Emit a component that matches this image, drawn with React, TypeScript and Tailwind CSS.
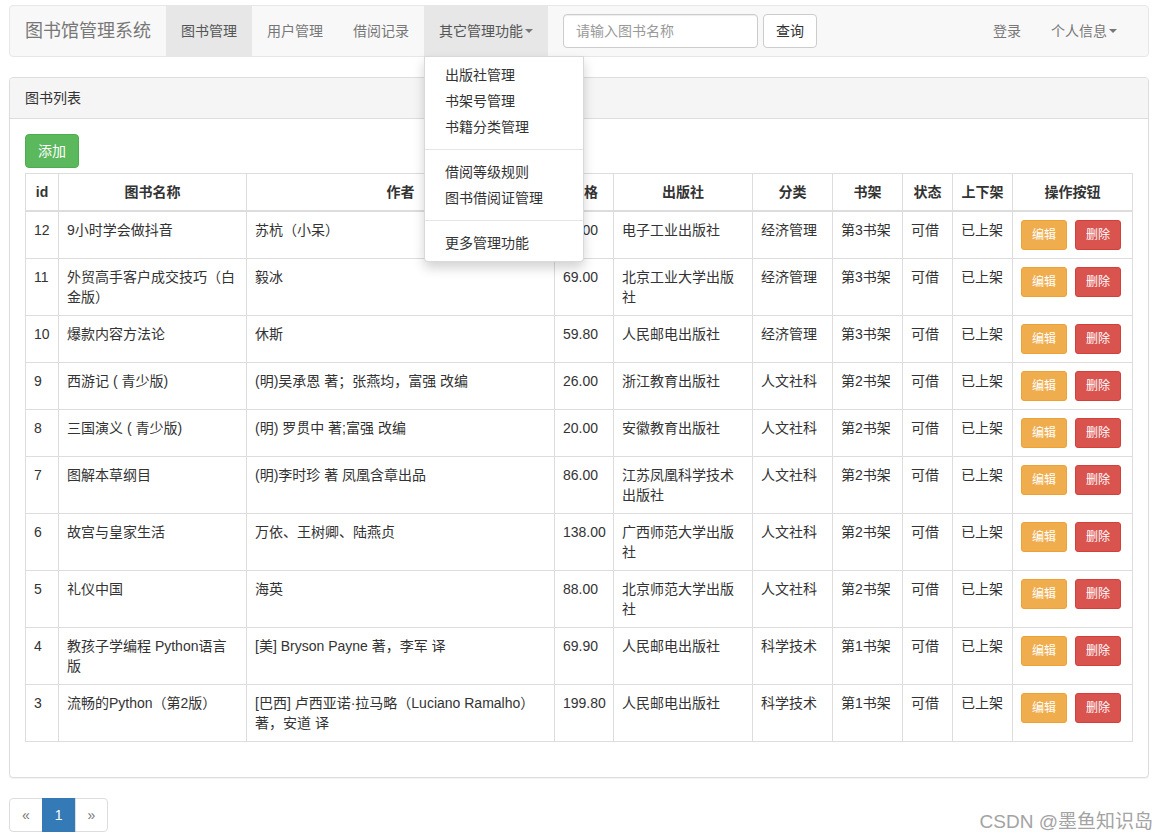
import React from "react";

type Row = {
  id: string;
  name: string;
  author: string;
  price: string;
  pub: string;
  cat: string;
  shelf: string;
};

const rows: Row[] = [
  { id: "12", name: "9小时学会做抖音", author: "苏杭（小呆）", price: "39.00", pub: "电子工业出版社", cat: "经济管理", shelf: "第3书架" },
  { id: "11", name: "外贸高手客户成交技巧（白金版）", author: "毅冰", price: "69.00", pub: "北京工业大学出版社", cat: "经济管理", shelf: "第3书架" },
  { id: "10", name: "爆款内容方法论", author: "休斯", price: "59.80", pub: "人民邮电出版社", cat: "经济管理", shelf: "第3书架" },
  { id: "9", name: "西游记 ( 青少版)", author: "(明)吴承恩 著；张燕均，富强 改编", price: "26.00", pub: "浙江教育出版社", cat: "人文社科", shelf: "第2书架" },
  { id: "8", name: "三国演义 ( 青少版)", author: "(明) 罗贯中 著;富强 改编", price: "20.00", pub: "安徽教育出版社", cat: "人文社科", shelf: "第2书架" },
  { id: "7", name: "图解本草纲目", author: "(明)李时珍 著 凤凰含章出品", price: "86.00", pub: "江苏凤凰科学技术出版社", cat: "人文社科", shelf: "第2书架" },
  { id: "6", name: "故宫与皇家生活", author: "万依、王树卿、陆燕贞", price: "138.00", pub: "广西师范大学出版社", cat: "人文社科", shelf: "第2书架" },
  { id: "5", name: "礼仪中国", author: "海英", price: "88.00", pub: "北京师范大学出版社", cat: "人文社科", shelf: "第2书架" },
  { id: "4", name: "教孩子学编程 Python语言版", author: "[美] Bryson Payne 著，李军 译", price: "69.90", pub: "人民邮电出版社", cat: "科学技术", shelf: "第1书架" },
  { id: "3", name: "流畅的Python（第2版）", author: "[巴西] 卢西亚诺·拉马略（Luciano Ramalho） 著，安道 译", price: "199.80", pub: "人民邮电出版社", cat: "科学技术", shelf: "第1书架" },
];

const headers = ["id", "图书名称", "作者", "价格", "出版社", "分类", "书架", "状态", "上下架", "操作按钮"];
const widths = [33, 188, 308, 59, 139, 80, 70, 50, 60, 120];

function Caret() {
  return (
    <span className="inline-block ml-[2px] w-0 h-0 border-t-[4px] border-l-[4px] border-r-[4px] border-t-[#777] border-l-transparent border-r-transparent align-middle" />
  );
}

export default function App() {
  return (
    <div
      className="relative h-[840px] overflow-hidden bg-white text-[14px] leading-[20px] text-[#333]"
      style={{ fontFamily: '"Liberation Sans", "Noto Sans CJK SC", sans-serif' }}
    >
      <div className="ml-[9px] w-[1140px] pt-[5px]">
        {/* Navbar */}
        <div className="relative z-10 flex h-[52px] items-stretch rounded-[4px] border border-[#e7e7e7] bg-[#f8f8f8]">
          <div className="flex h-[50px] items-center px-[15px] text-[18px] text-[#777]">图书馆管理系统</div>
          <div className="flex h-[50px] items-center bg-[#e7e7e7] px-[15px] text-[#555]">图书管理</div>
          <div className="flex h-[50px] items-center px-[15px] text-[#777]">用户管理</div>
          <div className="flex h-[50px] items-center px-[15px] text-[#777]">借阅记录</div>
          <div className="relative flex h-[50px] items-center bg-[#e7e7e7] px-[15px] text-[#555]">
            其它管理功能
            <Caret />
            <div className="absolute left-0 top-full w-[160px] rounded-b-[4px] border border-[rgba(0,0,0,0.15)] bg-white py-[5px] text-[#333] shadow-[0_6px_12px_rgba(0,0,0,0.175)]">
              <div className="px-[20px] py-[3px]">出版社管理</div>
              <div className="px-[20px] py-[3px]">书架号管理</div>
              <div className="px-[20px] py-[3px]">书籍分类管理</div>
              <div className="my-[9px] h-px bg-[#e5e5e5]" />
              <div className="px-[20px] py-[3px]">借阅等级规则</div>
              <div className="px-[20px] py-[3px]">图书借阅证管理</div>
              <div className="my-[9px] h-px bg-[#e5e5e5]" />
              <div className="px-[20px] py-[3px]">更多管理功能</div>
            </div>
          </div>
          <div className="ml-[15px] flex h-[50px] items-center gap-[5px]">
            <input
              placeholder="请输入图书名称"
              className="h-[34px] w-[195px] rounded-[4px] border border-[#ccc] bg-white px-[12px] py-[6px] text-[14px] text-[#555] shadow-[inset_0_1px_1px_rgba(0,0,0,0.075)] outline-none placeholder:text-[#999]"
            />
            <button className="h-[34px] rounded-[4px] border border-[#ccc] bg-white px-[12px] text-[14px] text-[#333]">查询</button>
          </div>
          <div className="flex-1" />
          <div className="flex h-[50px] items-center px-[15px] text-[#777]">登录</div>
          <div className="mr-[16px] flex h-[50px] items-center px-[15px] text-[#777]">
            个人信息
            <Caret />
          </div>
        </div>

        {/* Panel */}
        <div className="mt-[20px] rounded-[4px] border border-[#ddd] bg-white shadow-[0_1px_1px_rgba(0,0,0,0.05)]">
          <div className="rounded-t-[3px] border-b border-[#ddd] bg-[#f5f5f5] px-[15px] py-[10px]">图书列表</div>
          <div className="p-[15px]">
            <button className="h-[34px] rounded-[4px] border border-[#4cae4c] bg-[#5cb85c] px-[12px] text-[14px] text-white">添加</button>
            <table className="mb-[20px] mt-[5px] w-full table-fixed border-collapse">
              <colgroup>
                {widths.map((w, i) => (
                  <col key={i} style={{ width: w }} />
                ))}
              </colgroup>
              <thead>
                <tr>
                  {headers.map((h) => (
                    <th key={h} className="border border-b-2 border-[#ddd] p-[8px] text-center font-bold">
                      {h}
                    </th>
                  ))}
                </tr>
              </thead>
              <tbody>
                {rows.map((r) => (
                  <tr key={r.id}>
                    <td className="border border-[#ddd] p-[8px] align-top">{r.id}</td>
                    <td className="border border-[#ddd] p-[8px] align-top">{r.name}</td>
                    <td className="border border-[#ddd] p-[8px] align-top">{r.author}</td>
                    <td className="border border-[#ddd] p-[8px] align-top">{r.price}</td>
                    <td className="border border-[#ddd] p-[8px] align-top">{r.pub}</td>
                    <td className="border border-[#ddd] p-[8px] align-top">{r.cat}</td>
                    <td className="border border-[#ddd] p-[8px] align-top">{r.shelf}</td>
                    <td className="border border-[#ddd] p-[8px] align-top">可借</td>
                    <td className="border border-[#ddd] p-[8px] align-top">已上架</td>
                    <td className="border border-[#ddd] p-[8px] align-top">
                      <div className="flex gap-[8px]">
                        <button className="h-[30px] rounded-[3px] border border-[#eea236] bg-[#f0ad4e] px-[10px] text-[12px] leading-[18px] text-white">编辑</button>
                        <button className="h-[30px] rounded-[3px] border border-[#d43f3a] bg-[#d9534f] px-[10px] text-[12px] leading-[18px] text-white">删除</button>
                      </div>
                    </td>
                  </tr>
                ))}
              </tbody>
            </table>
          </div>
        </div>

        {/* Pagination */}
        <div className="mt-[20px] inline-flex">
          <span className="rounded-l-[4px] border border-[#ddd] bg-white px-[12px] py-[6px] text-[#777]">«</span>
          <span className="-ml-px border border-[#337ab7] bg-[#337ab7] px-[12px] py-[6px] text-white">1</span>
          <span className="-ml-px rounded-r-[4px] border border-[#ddd] bg-white px-[12px] py-[6px] text-[#777]">»</span>
        </div>
      </div>

      <div className="absolute bottom-[6px] right-[13px] text-[19px] leading-[24px] text-[#a3a3a3]">CSDN @墨鱼知识岛</div>
    </div>
  );
}
